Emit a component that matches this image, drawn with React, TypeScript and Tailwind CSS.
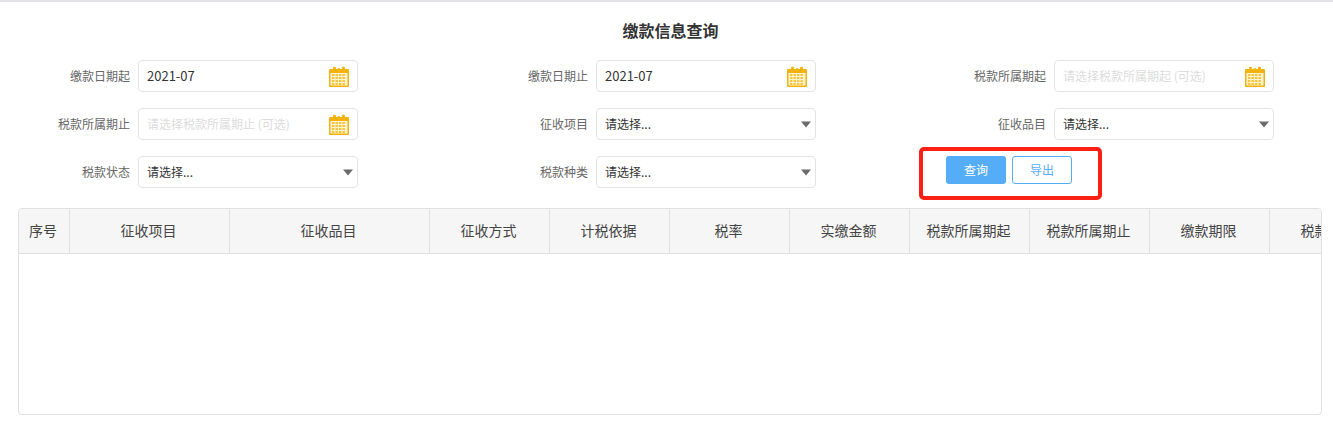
import React from 'react';

const FONT = "font-['Noto_Sans_CJK_SC','Liberation_Sans',sans-serif]";

const COLUMNS = [
  { title: '序号', width: 'w-[51px]' },
  { title: '征收项目', width: 'w-[160px]' },
  { title: '征收品目', width: 'w-[200px]' },
  { title: '征收方式', width: 'w-[120px]' },
  { title: '计税依据', width: 'w-[120px]' },
  { title: '税率', width: 'w-[120px]' },
  { title: '实缴金额', width: 'w-[120px]' },
  { title: '税款所属期起', width: 'w-[120px]' },
  { title: '税款所属期止', width: 'w-[120px]' },
  { title: '缴款期限', width: 'w-[120px]' },
  { title: '税款状态', width: 'w-[120px]' },
];

const CalendarIcon = () => (
  <svg width="20" height="21" viewBox="0 0 20 21" className="shrink-0">
    <rect x="0" y="3" width="20" height="18" rx="1" fill="#f2b20f" />
    <rect x="4" y="0.5" width="3" height="5" rx="1.5" fill="#f2b20f" />
    <rect x="13" y="0.5" width="3" height="5" rx="1.5" fill="#f2b20f" />
    <circle cx="10" cy="3.5" r="1.5" fill="#f2b20f" />
    <rect x="1.5" y="7" width="17" height="12.5" fill="#fdf3d0" />
    {[8, 11, 14, 17].map(y =>
      [3, 6.5, 10, 13.5].map(x => (
        <rect key={`${x}-${y}`} x={x} y={y} width="2.4" height="2" fill="#f5c53c" />
      ))
    )}
  </svg>
);

const Caret = () => (
  <svg width="12" height="7" viewBox="0 0 12 7" className="shrink-0">
    <path d="M1 0.5h10L6 6.5z" fill="#6b6b6b" />
  </svg>
);

const Label = ({ children }: { children: string }) => (
  <span className="w-[130px] text-right text-xs text-[#666]">{children}</span>
);

const DateField = ({ label, value, placeholder, width }: { label: string; value?: string; placeholder?: string; width: string }) => (
  <div className={`flex items-center justify-end gap-2 ${width}`}>
    <Label>{label}</Label>
    <div className="flex h-8 w-[220px] items-center justify-between rounded border border-[#e3e3e3] bg-white pl-2 pr-2 text-xs">
      {value ? <span className="text-[13px] text-[#333]">{value}</span> : <span className="text-[#dcdcdc]">{placeholder}</span>}
      <CalendarIcon />
    </div>
  </div>
);

const SelectField = ({ label, width }: { label: string; width: string }) => (
  <div className={`flex items-center justify-end gap-2 ${width}`}>
    <Label>{label}</Label>
    <div className="flex h-8 w-[220px] items-center justify-between rounded border border-[#e3e3e3] bg-white pl-2 pr-[3px] text-xs text-[#333]">
      <span>请选择...</span>
      <Caret />
    </div>
  </div>
);

export default function App() {
  return (
    <div className={`h-[427px] w-[1333px] overflow-hidden bg-white ${FONT}`}>
      <div className="h-[2px] bg-[#e2e2e6]" />
      <h1 className="mt-[18px] pl-[8px] text-center text-base leading-5 font-bold text-[#333]">缴款信息查询</h1>
      <div className="mt-[20px] flex flex-col gap-4">
        <div className="flex">
          <DateField label="缴款日期起" value="2021-07" width="w-[358px]" />
          <DateField label="缴款日期止" value="2021-07" width="w-[458px]" />
          <DateField label="税款所属期起" placeholder="请选择税款所属期起 (可选)" width="w-[458px]" />
        </div>
        <div className="flex">
          <DateField label="税款所属期止" placeholder="请选择税款所属期止 (可选)" width="w-[358px]" />
          <SelectField label="征收项目" width="w-[458px]" />
          <SelectField label="征收品目" width="w-[458px]" />
        </div>
        <div className="flex h-8">
          <SelectField label="税款状态" width="w-[358px]" />
          <SelectField label="税款种类" width="w-[458px]" />
          <div className="relative flex items-start gap-[6px] pl-[130px]">
            <button className="h-7 w-[60px] rounded-[3px] bg-[#55adf7] text-xs text-white">查询</button>
            <button className="h-7 w-[60px] rounded-[3px] border border-[#55adf7] bg-white text-xs text-[#55adf7]">导出</button>
            <div className="absolute top-[-9px] left-[103px] h-[53px] w-[183px] rounded-[5px] border-[4px] border-[#fb1f14]" />
          </div>
        </div>
      </div>
      <div className="mt-[20px] ml-[18px] h-[207px] w-[1304px] overflow-hidden rounded-sm border border-[#e0e0e0]">
        <div className="flex h-[45px] w-max border-b border-[#e0e0e0] bg-[#f6f6f6]">
          {COLUMNS.map(col => (
            <div
              key={col.title}
              className={`flex shrink-0 items-center justify-center border-r border-[#e0e0e0] pr-[2px] pb-[2px] text-sm text-[#444] ${col.width}`}
            >
              {col.title}
            </div>
          ))}
        </div>
      </div>
    </div>
  );
}
